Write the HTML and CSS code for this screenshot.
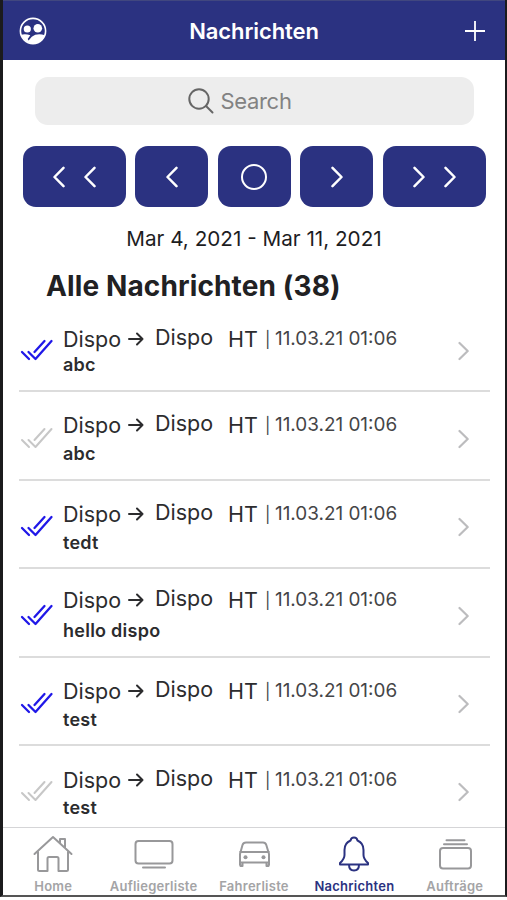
FILE: index.html
```html
<!DOCTYPE html>
<html lang="de">
<head>
<meta charset="utf-8">
<title>Nachrichten</title>
<link rel="stylesheet" href="styles.css">
</head>
<body>
<svg class="defs" width="0" height="0">
  <symbol id="checks" viewBox="0 0 34 24"><path d="M2 13 9 20M8.500 13 15.500 20 31.500 2M14.500 13 24.500 2"/></symbol>
  <symbol id="arrow" viewBox="0 0 16 14"><path d="M1 7H14.500M9 1.500 14.500 7 9 12.500"/></symbol>
  <symbol id="next" viewBox="0 0 12 20"><path d="M1.500 2 9.700 10 1.500 18"/></symbol>
  <symbol id="left" viewBox="0 0 12 22"><path d="M10.500 1.800 1.500 11 10.500 20.200"/></symbol>
  <symbol id="right" viewBox="0 0 12 22"><path d="M1.500 1.800 10.500 11 1.500 20.200"/></symbol>
</svg>
<div class="screen">
  <header class="bar">
    <svg class="users" viewBox="0 0 28 28"><circle cx="14" cy="14" r="12.600" fill="none" stroke="#fff" stroke-width="1.600"/><circle cx="8.300" cy="12" r="3.600" fill="#fff"/><circle cx="18.800" cy="11.300" r="4.300" fill="#fff"/><path fill="#fff" d="M2 17.800Q6.500 16.500 11.300 18.300L8.700 22 9.600 23.500 12.800 19.800Q18 15.800 26 18.300A13 13 0 0 1 14 26.500 13 13 0 0 1 2 17.800Z"/></svg>
    <h1>Nachrichten</h1>
    <svg class="plus" viewBox="0 0 20 20"><path d="M10 0V20M0 10H20"/></svg>
  </header>
  <main>
    <div class="search"><svg viewBox="0 0 26 26"><circle cx="11" cy="11" r="9.700"/><path d="M18 18 24.500 24.500"/></svg><span>Search</span></div>
    <nav class="pager">
      <button class="wide"><svg><use href="#left"/></svg><svg><use href="#left"/></svg></button>
      <button><svg><use href="#left"/></svg></button>
      <button><i class="ring"></i></button>
      <button><svg><use href="#right"/></svg></button>
      <button class="wide"><svg><use href="#right"/></svg><svg><use href="#right"/></svg></button>
    </nav>
    <p class="range"><span>Mar 4, 2021 - Mar 11, 2021</span></p>
    <h2>Alle Nachrichten (38)</h2>
    <ul>
      <li class="read low"><svg class="checks"><use href="#checks"/></svg><div class="body"><div class="route"><span class="from">Dispo</span><svg class="arrow"><use href="#arrow"/></svg><span class="to">Dispo</span><span class="code">HT</span><span class="pipe">|</span><time>11.03.21 01:06</time></div><b>abc</b></div><svg class="next"><use href="#next"/></svg></li>
      <li><svg class="checks"><use href="#checks"/></svg><div class="body"><div class="route"><span class="from">Dispo</span><svg class="arrow"><use href="#arrow"/></svg><span class="to">Dispo</span><span class="code">HT</span><span class="pipe">|</span><time>11.03.21 01:06</time></div><b>abc</b></div><svg class="next"><use href="#next"/></svg></li>
      <li class="read"><svg class="checks"><use href="#checks"/></svg><div class="body"><div class="route"><span class="from">Dispo</span><svg class="arrow"><use href="#arrow"/></svg><span class="to">Dispo</span><span class="code">HT</span><span class="pipe">|</span><time>11.03.21 01:06</time></div><b>tedt</b></div><svg class="next"><use href="#next"/></svg></li>
      <li class="read high"><svg class="checks"><use href="#checks"/></svg><div class="body"><div class="route"><span class="from">Dispo</span><svg class="arrow"><use href="#arrow"/></svg><span class="to">Dispo</span><span class="code">HT</span><span class="pipe">|</span><time>11.03.21 01:06</time></div><b>hello dispo</b></div><svg class="next"><use href="#next"/></svg></li>
      <li class="read"><svg class="checks"><use href="#checks"/></svg><div class="body"><div class="route"><span class="from">Dispo</span><svg class="arrow"><use href="#arrow"/></svg><span class="to">Dispo</span><span class="code">HT</span><span class="pipe">|</span><time>11.03.21 01:06</time></div><b>test</b></div><svg class="next"><use href="#next"/></svg></li>
      <li class="mid"><svg class="checks"><use href="#checks"/></svg><div class="body"><div class="route"><span class="from">Dispo</span><svg class="arrow"><use href="#arrow"/></svg><span class="to">Dispo</span><span class="code">HT</span><span class="pipe">|</span><time>11.03.21 01:06</time></div><b>test</b></div><svg class="next"><use href="#next"/></svg></li>
    </ul>
  </main>
  <footer>
    <a><svg viewBox="0 0 40 36"><path d="M1.500 18 20 1 38.500 18M5 16V33.500Q5 35 6.500 35H14.500V22.500Q14.500 21 16 21H24Q25.500 21 25.500 22.500V35H33.500Q35 35 35 33.500V16M27 7V3H32V12"/></svg><span>Home</span></a>
    <a><svg viewBox="0 0 40 36"><rect x="1.500" y="5" width="37" height="22.500" rx="3"/><path d="M9 31.500H31"/></svg><span>Aufliegerliste</span></a>
    <a><svg viewBox="0 0 40 36"><path d="M6 29V18L8.500 9Q9.300 6.500 12 6.500H29Q31.500 6.500 32.300 9L35 18V29M6 16H35M6 26.500H35M6.500 29V30H8.500V27M34.500 29V30H32.500V27"/><circle class="lamp" cx="11.500" cy="21.300" r="2"/><circle class="lamp" cx="29.500" cy="21.300" r="2"/></svg><span>Fahrerliste</span></a>
    <a class="active"><svg viewBox="0 0 40 36"><path d="M20 1.500Q17 1.500 16.500 4.500Q10.500 7 10.500 14V19Q10.500 23 6 27V28.500H34V27Q29.500 23 29.500 19V14Q29.500 7 23.500 4.500Q23 1.500 20 1.500ZM15 28.500Q15 34.500 20 34.500T25 28.500"/></svg><span>Nachrichten</span></a>
    <a><svg viewBox="0 0 40 36"><rect x="5" y="12" width="31" height="20.500" rx="3"/><path d="M11.500 4.300H29.500M9 8.300H32"/></svg><span>Aufträge</span></a>
  </footer>
</div>
</body>
</html>
```
FILE: styles.css
```css
* { box-sizing: border-box; margin: 0; padding: 0; }
body { width: 507px; height: 900px; overflow: hidden; background: #fff; font-family: Inter, "Liberation Sans", sans-serif; color: #2c2c2e; }
.defs { display: block; }
.screen { height: 897px; display: flex; flex-direction: column; border: solid #1b1b1d; border-width: 0 2px 2px 3px; border-bottom-color: #555; }
svg { display: block; flex: none; fill: none; stroke: currentColor; stroke-linecap: round; stroke-linejoin: round; overflow: visible; }
span, time, h1, h2, b { white-space: nowrap; }
.bar { height: 60px; flex: none; display: flex; align-items: center; justify-content: space-between; padding: 0 20px 0 16px; background: #2b3281; border-top: 1px solid #41477f; color: #fff; }
.users { width: 28px; height: 28px; stroke: none; }
.bar h1 { font-size: 22px; font-weight: 600; line-height: 28px; letter-spacing: -.1px; margin-right: 4px; }
.plus { width: 20px; height: 20px; stroke-width: 1.800; stroke-linecap: butt; }
main { flex: 1; min-height: 0; overflow: hidden; padding-top: 17px; }
.search { height: 48px; margin: 0 31px 0 32px; padding-right: 29px; border-radius: 13px; background: #ededed; display: flex; align-items: center; justify-content: center; gap: 6px; color: #828282; font-size: 22px; letter-spacing: -.3px; }
.search svg { width: 26px; height: 26px; stroke: #666; stroke-width: 2; }
.pager { display: flex; gap: 9.500px; margin: 21px 19.500px 0 19.500px; height: 61px; }
.pager button { flex: 73 1 0; display: flex; align-items: center; justify-content: center; gap: 19px; border: 0; border-radius: 13px; background: #2b3281; color: #fff; }
.pager .wide { flex-grow: 103; }
.pager svg { width: 12px; height: 22px; stroke-width: 2.500; }
.ring { width: 26px; height: 26px; border: 2px solid #fff; border-radius: 50%; }
.range { text-align: center; font-size: 20.700px; line-height: 28px; margin-top: 18px; color: #1d1d1f; }
h2 { font-size: 28px; line-height: 36px; font-weight: 700; letter-spacing: .12px; margin: 15px 0 0 43px; color: #212123; }
ul { list-style: none; padding: 0 15px 0 16px; }
li { height: 88.400px; border-bottom: 2px solid #dcdcdc; display: flex; align-items: flex-start; color: #2c2c2e; }
li:last-child { border: 0; }
.checks { width: 34px; height: 24px; margin: 34.500px 8px 0 1px; color: #c7c7c7; stroke-width: 2; }
.read .checks { color: #2018e8; stroke-width: 2.300; }
.body { flex: 1; height: 88px; display: flex; flex-direction: column; justify-content: space-between; padding: 19px 0 14px 1px; }
.low .body { padding: 21px 0 16px 1px; }
.mid .body { padding-top: 20px; }
.high .body { padding-top: 17px; }
.route { display: flex; align-items: center; height: 28px; font-size: 21.500px; line-height: 28px; }
.from { width: 65px; }
.arrow { width: 16px; height: 14px; stroke-width: 2; }
.to { width: 73px; margin: -4px 0 0 11px; }
.code { width: 37px; }
.pipe { width: 10px; font-size: 16px; color: #454547; }
time { font-size: 18.900px; color: #454547; }
.body b { font-size: 18px; line-height: 24px; font-weight: 600; letter-spacing: .25px; }
.next { width: 12px; height: 20px; margin: 36.500px 20.500px 0 0; color: #bcbcbe; stroke-width: 2.200; }
footer { height: 68px; flex: none; border-top: 1px solid #d5d5d7; display: grid; grid-template-columns: repeat(5, 1fr); padding-top: 8px; color: #98989a; }
footer a { display: flex; flex-direction: column; align-items: center; gap: 6px; }
footer svg { width: 40px; height: 36px; stroke-width: 2; }
.lamp { fill: currentColor; stroke: none; }
footer span { font-size: 13px; line-height: 16px; font-weight: 600; letter-spacing: .25px; color: #a4a4a6; }
footer .active, footer .active span { color: #2b3281; }
```
